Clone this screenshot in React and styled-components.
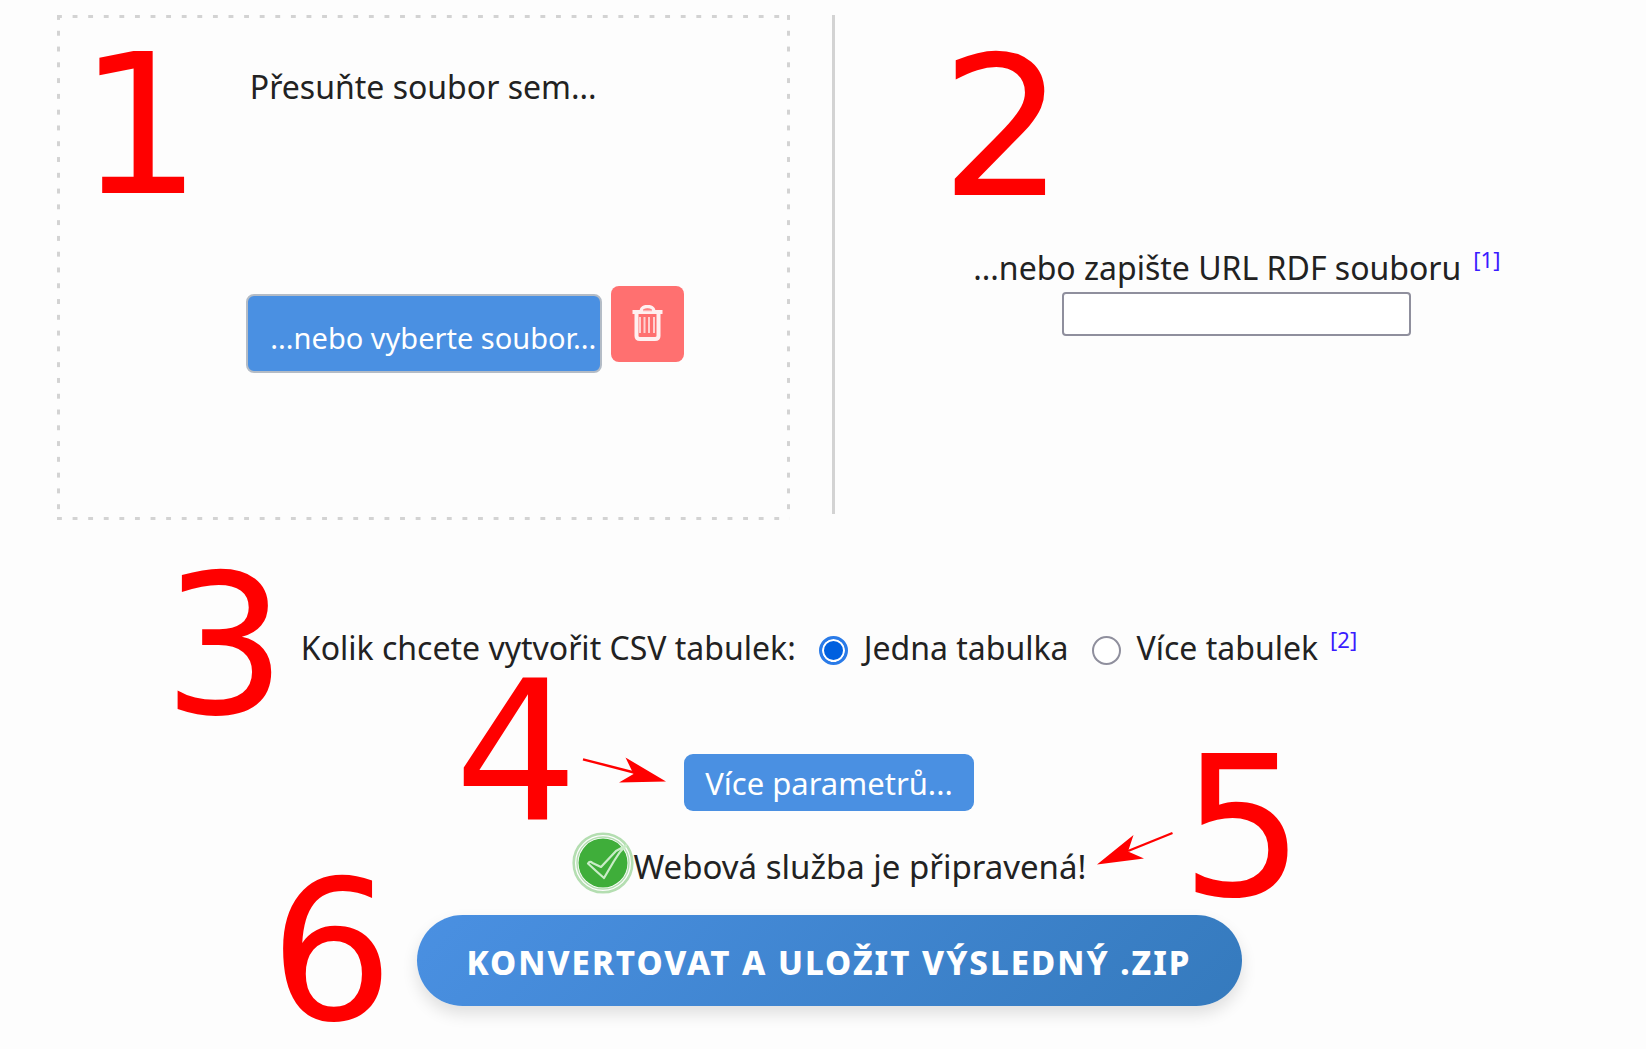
import React, { useState } from "react";
import styled, { createGlobalStyle } from "styled-components";

const GlobalStyle = createGlobalStyle`
  body {
    margin: 0;
    background: #fdfdfd;
    color: #222;
    font: 32px/48px "Noto Sans", "Open Sans", sans-serif;
  }
  * { box-sizing: border-box; }
`;

const Page = styled.main`
  padding: 15px 0 40px;
`;

const Sources = styled.section`
  display: grid;
  grid-template-columns: minmax(0, 21fr) 3px minmax(0, 22fr);
  padding-left: 57px;
`;

const dash = (dir) =>
  `linear-gradient(${dir}, #d3d3d3 5px, transparent 5px)`;

const DropZone = styled.div`
  position: relative;
  min-height: 505px;
  margin-right: 42px;
  padding: 48px 3px 0;
  text-align: center;
  background:
    ${dash("to right")} left top / calc(100% / 47) 3px repeat-x,
    ${dash("to right")} left bottom / calc(100% / 47) 3px repeat-x,
    ${dash("to bottom")} left top / 3px calc(100% / 32) repeat-y,
    ${dash("to bottom")} right top / 3px calc(100% / 32) repeat-y;
`;

const Hint = styled.p`
  margin: 0;
`;

const FileRow = styled.div`
  display: flex;
  justify-content: center;
  align-items: flex-start;
  gap: 9px;
  margin-top: 175px;
  padding-left: 84px;
`;

const HiddenFile = styled.input`
  position: absolute;
  width: 1px;
  height: 1px;
  opacity: 0;
`;

const FileLabel = styled.label`
  height: 79px;
  margin-top: 8px;
  padding: 18px 4px 0 22px;
  border: 2px solid #b4bcc6;
  border-radius: 8px;
  background: #4a90e2;
  color: #fff;
  font-size: 29px;
  white-space: nowrap;
  cursor: pointer;
`;

const DeleteButton = styled.button`
  display: flex;
  justify-content: center;
  width: 73px;
  height: 76px;
  padding: 19px 0 0;
  border: 0;
  border-radius: 8px;
  background: #ff7070;
  cursor: pointer;
`;

const Divider = styled.div`
  height: 499px;
  background: #d3d3d3;
`;

const UrlPane = styled.div`
  position: relative;
  display: flex;
  flex-direction: column;
  align-items: center;
  padding: 229px 7px 0 0;
`;

const UrlInput = styled.input`
  width: 349px;
  height: 44px;
  border: 2px solid #8f8f9d;
  border-radius: 4px;
  background: #fff;
  font: inherit;
`;

const Note = styled.a`
  margin-left: 12px;
  color: #3a1cff;
  font-size: 22px;
  line-height: 24px;
  text-decoration: none;
  vertical-align: 12px;
`;

const Form = styled.section`
  display: flex;
  flex-direction: column;
  align-items: center;
  gap: 21px;
  margin-top: 104px;
  padding-left: 12px;
`;

const Question = styled.div`
  position: relative;
  display: flex;
  align-items: center;
  margin-bottom: 61px;
  white-space: nowrap;
`;

const Radio = styled.input`
  appearance: none;
  width: 29px;
  height: 29px;
  margin: 4px 16px 0 23px;
  border: 2px solid #8f8f9d;
  border-radius: 50%;
  background: #fff;
  &:checked {
    border: 3px solid #2a7be8;
    background: #0060df;
    box-shadow: inset 0 0 0 2px #fff;
  }
`;

const Anchor = styled.div`
  position: relative;
  display: flex;
  align-items: center;
`;

const MoreButton = styled.button`
  height: 57px;
  padding: 0 21px;
  border: 0;
  border-radius: 9px;
  background: #4a90e2;
  color: #fff;
  font: inherit;
  font-size: 31px;
  cursor: pointer;
`;

const Status = styled(Anchor)`
  height: 62px;
  padding-top: 8px;
  font-size: 33px;
`;

const ConvertButton = styled.button`
  height: 91px;
  padding: 4px 50px 0;
  border: 0;
  border-radius: 46px;
  background: linear-gradient(135deg, #4a90e2, #357abd);
  box-shadow: 0 8px 16px rgba(0, 0, 0, 0.12);
  color: #fff;
  font: 800 33px/48px "Noto Sans", "Open Sans", sans-serif;
  letter-spacing: 2px;
  text-transform: uppercase;
  white-space: nowrap;
  cursor: pointer;
`;

const Marker = styled.span`
  position: absolute;
  left: ${(p) => p.$left}px;
  top: ${(p) => p.$top}px;
  color: #f00;
  font: 195px/195px "DejaVu Sans", sans-serif;
  pointer-events: none;
`;

const Arrow = styled.svg`
  position: absolute;
  left: ${(p) => p.$left};
  top: ${(p) => p.$top}px;
  fill: #f00;
  stroke: none;
  line {
    stroke: #f00;
    stroke-width: 2.4;
  }
`;

const CheckSvg = styled.svg`
  flex: none;
  margin-top: -8px;
`;

function TrashIcon() {
  return (
    <svg width="31" height="36" viewBox="0 0 31 36" fill="none" aria-hidden="true">
      <path d="M9 6C9 0 22 0 22 6" stroke="#fff0f0" strokeWidth="3.4" />
      <path d="M0.500 7H30.500" stroke="#fff0f0" strokeWidth="4" />
      <path d="M4.500 8V31Q4.500 34 8 34H23Q26.500 34 26.500 31V8" stroke="#fff0f0" strokeWidth="4" />
      <path d="M8 12V28M12.500 12V28M17 12V28M22 12V28" stroke="#ffd0d0" strokeWidth="2" />
      <path d="M11 5.500H20" stroke="#ffb0b0" strokeWidth="1.500" />
    </svg>
  );
}

function CheckIcon() {
  return (
    <CheckSvg width="62" height="62" viewBox="0 0 62 62" fill="none" aria-hidden="true">
      <circle cx="31" cy="31" r="29.300" stroke="#b4deb1" strokeWidth="2.600" />
      <circle cx="31" cy="31" r="26" stroke="#b4deb1" strokeWidth="1.400" />
      <circle cx="31" cy="31" r="24.500" fill="#3fae3a" />
      <path
        d="M16 31.500Q18 28.500 20.500 31L29 35L44 19L54 13.500Q47 20 42 29L32 46Q25 40 16 31.500Z"
        stroke="#c9ecc7"
        strokeWidth="2.200"
        strokeLinejoin="round"
      />
    </CheckSvg>
  );
}

export default function App() {
  const [count, setCount] = useState("one");
  return (
    <>
      <GlobalStyle />
      <Page>
        <Sources>
          <DropZone>
            <Marker $left={21} $top={13}>1</Marker>
            <Hint>Přesuňte soubor sem...</Hint>
            <FileRow>
              <HiddenFile type="file" id="rdf-file" />
              <FileLabel htmlFor="rdf-file">...nebo vyberte soubor...</FileLabel>
              <DeleteButton type="button" aria-label="Odstranit soubor">
                <TrashIcon />
              </DeleteButton>
            </FileRow>
          </DropZone>
          <Divider />
          <UrlPane>
            <Marker $left={106} $top={15}>2</Marker>
            <Hint>
              <label htmlFor="rdf-url">...nebo zapište URL RDF souboru</label>
              <Note href="#note-1">[1]</Note>
            </Hint>
            <UrlInput id="rdf-url" type="text" />
          </UrlPane>
        </Sources>
        <Form>
          <Question role="radiogroup" aria-labelledby="count-label">
            <Marker $left={-138} $top={-76}>3</Marker>
            <span id="count-label">Kolik chcete vytvořit CSV tabulek:</span>
            <Radio type="radio" name="count" id="one" checked={count === "one"} onChange={() => setCount("one")} />
            <label htmlFor="one">Jedna tabulka</label>
            <Radio type="radio" name="count" id="more" checked={count === "more"} onChange={() => setCount("more")} />
            <label htmlFor="more">Více tabulek</label>
            <span><Note href="#note-2">[2]</Note></span>
          </Question>
          <Anchor>
            <Marker $left={-230} $top={-100}>4</Marker>
            <Arrow $left="-104px" $top={0} width="90" height="32" aria-hidden="true">
              <line x1="3" y1="5.300" x2="54" y2="18.500" />
              <path d="M86 27.500L45.500 3.500L53.500 20L39 28.500Z" />
            </Arrow>
            <MoreButton type="button">Více parametrů...</MoreButton>
          </Anchor>
          <Status>
            <CheckIcon />
            <span>Webová služba je připravená!</span>
            <Arrow $left="calc(100% + 6px)" $top={-3} width="85" height="40" aria-hidden="true">
              <line x1="80.500" y1="4" x2="36" y2="22" />
              <path d="M5 35.500L41.500 6L36 22.500L52 29.500Z" />
            </Arrow>
            <Marker $left={609} $top={-102}>5</Marker>
          </Status>
          <Anchor>
            <Marker $left={-147} $top={-61}>6</Marker>
            <ConvertButton type="button">Konvertovat a uložit výsledný .zip</ConvertButton>
          </Anchor>
        </Form>
      </Page>
    </>
  );
}
